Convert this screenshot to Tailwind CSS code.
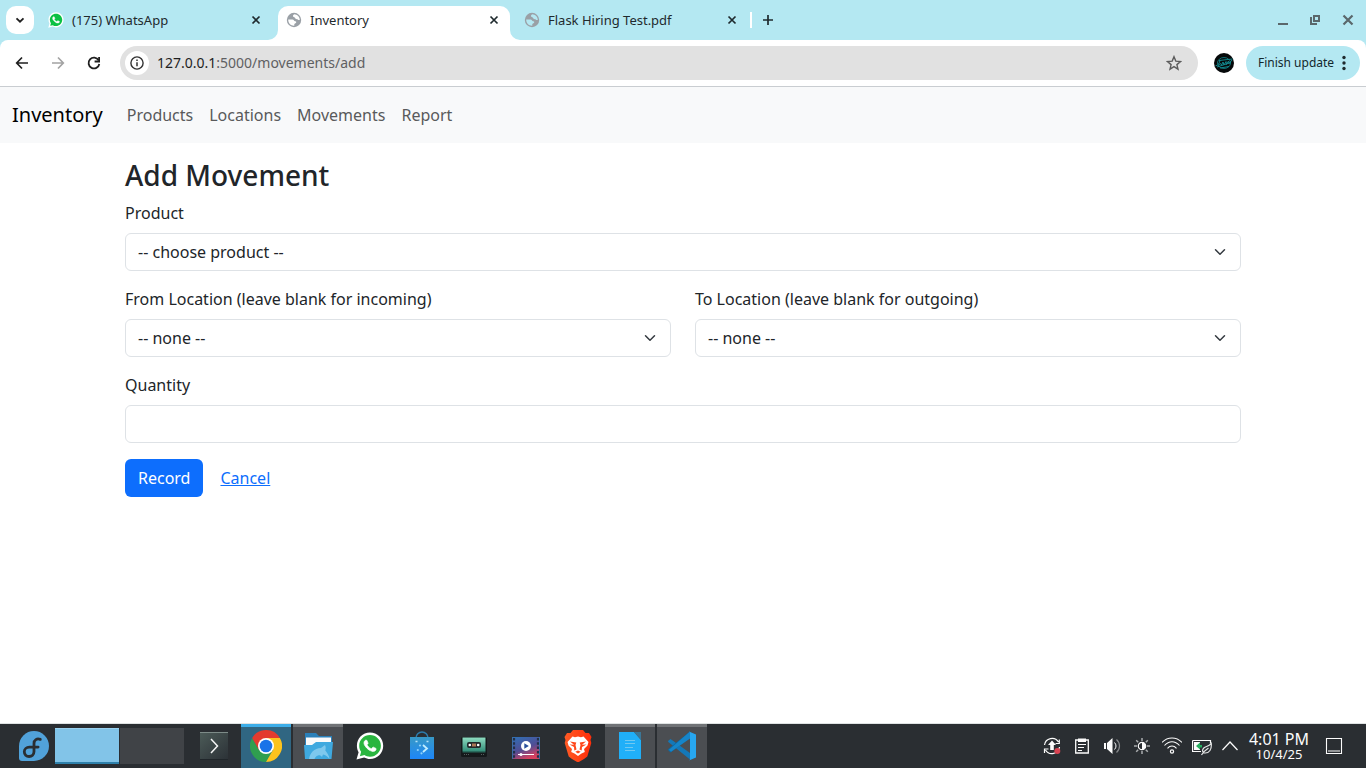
<!DOCTYPE html>
<html lang="en">
<head>
<meta charset="utf-8">
<meta name="viewport" content="width=device-width, initial-scale=1">
<title>Inventory</title>
<script src="https://cdn.jsdelivr.net/npm/@tailwindcss/browser@4"></script>
</head>
<body class="flex min-h-screen flex-col bg-white font-['Noto_Sans',sans-serif] text-base text-[#212529]">

<!-- Shared symbols -->
<svg class="hidden" aria-hidden="true">
  <symbol id="x" viewBox="0 0 16 16"><path d="M4.500 4.500l7 7M11.500 4.500l-7 7" stroke="currentColor" stroke-width="1.700" fill="none"/></symbol>
  <symbol id="chev" viewBox="0 0 16 16"><path d="M2 5l6 6 6-6" fill="none" stroke="#343a40" stroke-width="2" stroke-linecap="round" stroke-linejoin="round"/></symbol>
  <symbol id="globe" viewBox="0 0 16 16"><circle cx="8" cy="8" r="7.200" fill="#9aa0a6"/><path d="M2.200 7.600h4.300c1.300 0 1.400 1.700 2.800 1.700 1 0 1.300 1 .5 1.700L8.300 12v1.800C4.800 14 2.100 11.300 2.200 7.600z M8.200 2.300c-.9.500-1.400 1.200-1.200 2 .2.800 1.300.6 1.700 1.300.5.900 1.100 1.700 2.200 1.500.7-.1.800.9 1.500.9h1.400C13.800 4.900 11.300 2.400 8.200 2.300z" fill="currentColor"/></symbol>
  <symbol id="wa" viewBox="0 0 28 28"><path d="M14 .6C6.700.6.900 6.500.9 13.700c0 2.400.6 4.600 1.700 6.500L.5 27.500l7.600-2c1.800.9 3.800 1.500 5.900 1.500 7.200 0 13.200-6 13.200-13.300C27.200 6.500 21.300.6 14 .6z" fill="#fff"/><path d="M14 2.900c-6 0-10.800 4.800-10.800 10.800 0 2.300.7 4.400 1.900 6.100l-1.200 4.400 4.500-1.200c1.600 1.100 3.500 1.700 5.600 1.700 6 0 10.900-5 10.900-11S20 2.900 14 2.900z" fill="var(--wa)"/><path transform="translate(2 1.800)" d="M17.472 14.382c-.297-.149-1.758-.867-2.030-.967-.273-.099-.471-.148-.67.15-.197.297-.767.966-.94 1.164-.173.199-.347.223-.644.075-.297-.15-1.255-.463-2.390-1.475-.883-.788-1.480-1.761-1.653-2.059-.173-.297-.018-.458.13-.606.134-.133.298-.347.446-.52.149-.174.198-.298.298-.497.099-.198.05-.371-.025-.52-.075-.149-.669-1.612-.916-2.207-.242-.579-.487-.5-.669-.51-.173-.008-.371-.01-.57-.01-.198 0-.52.074-.792.372-.272.297-1.040 1.016-1.040 2.479 0 1.462 1.065 2.875 1.213 3.074.149.198 2.096 3.200 5.077 4.487.709.306 1.262.489 1.694.625.712.227 1.360.195 1.871.118.571-.085 1.758-.719 2.006-1.413.248-.694.248-1.289.173-1.413-.074-.124-.272-.198-.57-.347" fill="#fff" stroke="#fff" stroke-width=".7"/></symbol>
</svg>

<!-- Tab strip -->
<header class="bg-[#b4e8f2]">
  <div class="flex h-10 pt-1.5 pl-1.5 pr-2.5 text-[13px] leading-5 text-[#1f2a2e]">
    <button aria-label="Search tabs" class="mr-1.5 flex size-7 items-center justify-center rounded-[10px] bg-white"><svg class="size-4" viewBox="0 0 16 16"><path d="M4.500 6.300L8 9.700l3.500-3.400" stroke="#1f1f1f" stroke-width="1.800" fill="none"/></svg></button>
    <div class="flex gap-1.5">
      <div class="flex h-7 w-[232px] items-center px-2">
        <svg class="mr-2 size-4 [--wa:#0cc143]"><use href="#wa"/></svg><span class="grow">(175) WhatsApp</span>
        <button aria-label="Close WhatsApp tab"><svg class="size-4"><use href="#x"/></svg></button>
      </div>
      <div class="relative flex h-[34px] w-[232px] items-center rounded-t-[10px] bg-white px-2 pb-1.5">
        <svg class="absolute right-full bottom-0 size-2.5" viewBox="0 0 10 10"><path d="M10 0v10H0A10 10 0 0 0 10 0z" fill="#fff"/></svg>
        <svg class="absolute bottom-0 left-full size-2.5" viewBox="0 0 10 10"><path d="M0 0v10h10A10 10 0 0 1 0 0z" fill="#fff"/></svg>
        <svg class="mr-2 size-4 text-white"><use href="#globe"/></svg><span class="grow">Inventory</span>
        <button aria-label="Close Inventory tab"><svg class="size-4"><use href="#x"/></svg></button>
      </div>
      <div class="flex h-7 w-[232px] items-center px-2">
        <svg class="mr-2 size-4 text-[#b4e8f2]"><use href="#globe"/></svg><span class="grow">Flask Hiring Test.pdf</span>
        <button aria-label="Close PDF tab"><svg class="size-4"><use href="#x"/></svg></button>
      </div>
    </div>
    <div class="mt-1.5 ml-0.5 h-4 w-0.5 bg-white"></div>
    <button aria-label="New tab" class="ml-2 flex h-7 items-center"><svg class="size-4" viewBox="0 0 16 16"><path d="M8 3v10M3 8h10" stroke="#1f2a2e" stroke-width="1.700"/></svg></button>
    <div class="ml-auto flex h-7 items-center gap-4 text-[#5a676b]">
      <button aria-label="Minimize"><svg class="size-4" viewBox="0 0 16 16"><path d="M2 12h10" stroke="currentColor" stroke-width="2"/></svg></button>
      <button aria-label="Restore"><svg class="size-4" viewBox="0 0 16 16"><path d="M6 4h5v5H6zM3 5v7h6" stroke="currentColor" stroke-width="2" fill="none"/></svg></button>
      <button aria-label="Close window"><svg class="size-4" viewBox="0 0 16 16"><path d="M3.500 3.500l9 9M12.500 3.500l-9 9" stroke="currentColor" stroke-width="2.200"/></svg></button>
    </div>
  </div>

  <!-- Toolbar -->
  <div class="flex h-[47px] items-center rounded-t-lg border-b border-[#c9cdd1] bg-white pl-3 pr-1.5">
    <div class="flex gap-4">
      <button aria-label="Back"><svg class="size-5" viewBox="0 0 20 20"><path d="M16 10H5M10 4.500L4.700 10l5.300 5.500" stroke="#1f1f1f" stroke-width="1.700" fill="none"/></svg></button>
      <button aria-label="Forward"><svg class="size-5" viewBox="0 0 20 20"><path d="M4 10h11M10 4.500l5.300 5.500-5.300 5.500" stroke="#a3a3a3" stroke-width="1.700" fill="none"/></svg></button>
      <button aria-label="Reload"><svg class="size-5" viewBox="0 0 20 20"><path d="M14.600 7.200A5.400 5.400 0 1 0 15.300 11" stroke="#1f1f1f" stroke-width="1.800" fill="none"/><path d="M15.100 4v4.500h-4.500" stroke="#1f1f1f" stroke-width="1.800" fill="none"/></svg></button>
    </div>
    <div class="ml-4 flex h-[34px] grow items-center rounded-full bg-[#e1e1e1] pl-[5px] pr-4 text-sm">
      <button aria-label="Site information" class="mr-2 flex size-6 items-center justify-center rounded-full bg-white"><svg class="size-4" viewBox="0 0 16 16"><circle cx="8" cy="8" r="6.100" fill="none" stroke="#333" stroke-width="1.400"/><path d="M8 7.200v4M8 4.500v1.500" stroke="#333" stroke-width="1.500"/></svg></button>
      <div class="grow text-[#5f6062]"><span class="text-[#1f1f1f]">127.0.0.1</span>:5000/movements/add</div>
      <button aria-label="Bookmark this page"><svg class="size-4" viewBox="0 0 16 16"><path d="M8 1.700l1.800 4.400 4.700.4-3.600 3.100 1.100 4.600-4-2.500-4 2.500 1.100-4.600-3.600-3.100 4.700-.4z" fill="none" stroke="#5c5c5c" stroke-width="1.400"/></svg></button>
    </div>
    <button aria-label="Profile" class="mr-3 ml-4"><svg class="size-5" viewBox="0 0 20 20"><circle cx="10" cy="10" r="10" fill="#06090a"/><g fill="none" stroke="#12878c"><ellipse cx="10" cy="10" rx="6.500" ry="5.500" stroke-width=".8"/><path d="M1.500 12.800c3-.3 4-3 4.500-5.500M4 12.500l2.500-2 1 1.500 1.500-3 1 3 2-3.500.5 3L14.500 8l.5 2.500L18 7M3 14l14-4.500M5 7.500L18.500 6M6 15l9-1.500" stroke-width="1"/></g></svg></button>
    <button class="flex h-[34px] w-[114px] items-center justify-between rounded-full bg-[#b4e8f2] pl-3 pr-2 text-xs text-[#12272c]">Finish update<svg class="size-4" viewBox="0 0 16 16" fill="#1f2a2e"><circle cx="8" cy="2.500" r="1.700"/><circle cx="8" cy="8" r="1.700"/><circle cx="8" cy="13.500" r="1.700"/></svg></button>
  </div>
</header>

<nav class="flex h-14 items-center bg-[#f8f9fa] px-3">
  <a href="#" class="mr-4 text-xl text-black">Inventory</a>
  <div class="flex text-[#595a5b]">
    <a href="#" class="px-2">Products</a>
    <a href="#" class="px-2">Locations</a>
    <a href="#" class="px-2">Movements</a>
    <a href="#" class="px-2">Report</a>
  </div>
</nav>

<main class="mx-auto w-full max-w-[1140px] grow px-3 pt-4">
  <h2 class="mb-2.5 text-[28px] leading-8 font-medium">Add Movement</h2>
  <form class="flex flex-col gap-4">
    <div>
      <label for="product" class="mb-2 block">Product</label>
      <div class="relative">
        <select id="product" class="block h-[38px] w-full appearance-none rounded-md border border-[#dee2e6] bg-white pl-3 pr-9"><option>-- choose product --</option></select>
        <svg class="pointer-events-none absolute top-[13px] right-3.5 h-3 w-3.5"><use href="#chev"/></svg>
      </div>
    </div>
    <div class="grid grid-cols-2 gap-6">
      <div>
        <label for="from" class="mb-2 block">From Location (leave blank for incoming)</label>
        <div class="relative">
          <select id="from" class="block h-[38px] w-full appearance-none rounded-md border border-[#dee2e6] bg-white pl-3 pr-9"><option>-- none --</option></select>
          <svg class="pointer-events-none absolute top-[13px] right-3.5 h-3 w-3.5"><use href="#chev"/></svg>
        </div>
      </div>
      <div>
        <label for="to" class="mb-2 block">To Location (leave blank for outgoing)</label>
        <div class="relative">
          <select id="to" class="block h-[38px] w-full appearance-none rounded-md border border-[#dee2e6] bg-white pl-3 pr-9"><option>-- none --</option></select>
          <svg class="pointer-events-none absolute top-[13px] right-3.5 h-3 w-3.5"><use href="#chev"/></svg>
        </div>
      </div>
    </div>
    <div>
      <label for="qty" class="mb-2 block">Quantity</label>
      <input id="qty" type="text" inputmode="numeric" class="block h-[38px] w-full rounded-md border border-[#dee2e6] bg-white px-3">
    </div>
    <div class="flex items-center gap-[17px]">
      <button type="button" class="h-[38px] rounded-md bg-[#0d6efd] px-[13px] text-white">Record</button>
      <a href="#" class="text-[#0d6efd] underline">Cancel</a>
    </div>
  </form>
</main>

<!-- Desktop panel -->
<footer class="flex h-[45px] items-center border-t border-[#dfe3e3] bg-[#2a2e32] pl-[18px] pr-[23px] text-[#fcfcfc]">
  <button aria-label="Application launcher"><svg class="size-8" viewBox="0 0 32 32"><path d="M16 1a15 15 0 1 1 0 30H4a3 3 0 0 1-3-3V16A15 15 0 0 1 16 1z" fill="#51a2da"/><path d="M22.300 9.400c-3.400-1.400-6.300.6-6.300 4v8.200c0 3-2.200 4.900-4.900 4.900-2.800 0-4.800-2-4.800-4.700s2.300-4.700 5-4.700h8.800" stroke="#2a2e32" stroke-width="2.800" fill="none" stroke-linecap="round"/></svg></button>
  <div class="ml-[5px] flex gap-px">
    <button aria-label="Desktop 1" class="h-9 w-16 border-t border-b-2 border-t-[#9bd2f0] border-b-[#2f81ab] bg-[#82c4e8]"></button>
    <button aria-label="Desktop 2" class="h-9 w-16 bg-[#404347]"></button>
  </div>
  <button aria-label="Terminal" class="ml-4 flex size-7 items-center justify-center border-t border-b border-t-[#7d8b88] border-b-[#20262a] bg-linear-to-br from-[#4c5b58] to-[#2c3237]"><svg class="size-5" viewBox="0 0 20 20"><path d="M7 3l6.500 7L7 17" stroke="#f5f5f5" stroke-width="1.500" fill="none"/></svg></button>
  <div class="ml-[13px] flex h-full gap-0.5">
    <button aria-label="Chrome" class="flex w-[50px] items-center justify-center border-t-3 border-[#3daee9] bg-[#306682]"><svg class="mb-1 size-8" viewBox="0 0 32 32"><path d="M16 16L22.900 20 16 32A16 16 0 0 1 2.140 8L9.100 20z" fill="#2f9e4f"/><path d="M16 8h13.860A16 16 0 0 1 16 32l6.930-12z" fill="#fcc31e"/><path d="M16 8H29.860A16 16 0 0 0 2.140 8L9.070 20z" fill="#e33b2e"/><circle cx="16" cy="16" r="8" fill="#fff"/><circle cx="16" cy="16" r="6.300" fill="#1a73e8"/></svg></button>
    <button aria-label="Files" class="flex w-[50px] items-center justify-center border-t-3 border-[#707376] bg-[#4b4e52]"><svg class="mb-1 size-8" viewBox="0 0 32 32"><path d="M3 3h11l3 3h13v10H3z" fill="#2a80b9"/><path d="M4 7.500h25V18H4z" fill="#fafafa"/><path d="M2 15h8l4-3h17l-1.500 17H3z" fill="#3fa9df"/><path d="M7 29c1-6 5-11 12-11l4-3c1 2 .8 3.500.3 5.500 2.200 2.500 3.700 5 4.200 8.500-2-2.500-4-4-6.500-4.500l-1 2.500c-1-1.500-2.500-2-4-1.500-2 .5-3 2-3.500 3.500z" fill="#7ec8ed"/></svg></button>
    <button aria-label="WhatsApp" class="flex w-[50px] items-center justify-center"><svg class="size-7 [--wa:#29b53f]"><use href="#wa"/></svg></button>
    <button aria-label="Discover" class="flex w-[50px] items-center justify-center"><svg class="size-8" viewBox="0 0 32 32"><defs><linearGradient id="bag" x1="0" y1="0" x2="0" y2="1"><stop stop-color="#3899c6"/><stop offset="1" stop-color="#1d86f8"/></linearGradient></defs><path d="M10 10V8a6 6 0 0 1 12 0v2" fill="none" stroke="#2c7cac" stroke-width="1.500"/><path d="M4 7h24v22H4z" fill="url(#bag)"/><path d="M9.500 11.500h2M20.500 11.500h2" stroke="#b5e2fa" stroke-width="1.500"/><path d="M17 15l4 3.500-4 3.500" stroke="#c0edff" stroke-width="1.800" fill="none"/><g fill="#8fd2fc"><circle cx="14" cy="15.500" r="1.100"/><circle cx="11.800" cy="20" r="1.100"/><circle cx="15.500" cy="23.300" r="1.100"/></g></svg></button>
    <button aria-label="Cassette player" class="flex w-[50px] items-center justify-center"><svg class="size-8" viewBox="0 0 32 32"><defs><linearGradient id="tape" x1="0" y1="0" x2="0" y2="1"><stop stop-color="#8edcc1"/><stop offset="1" stop-color="#35907b"/></linearGradient></defs><rect x="3" y="7" width="26" height="20" rx="1.500" fill="#15191b"/><path d="M4.500 7.500h23V21h-23z" fill="url(#tape)"/><rect x="9" y="12" width="14" height="6" rx="2" fill="#22292b"/><path d="M14 13.500h4v3h-4z" fill="#ac7656"/><circle cx="11.800" cy="15" r="1.300" fill="#fff"/><circle cx="20.200" cy="15" r="1.300" fill="#fff"/><path d="M4.500 21h23v1.500h-23z" fill="#286b5d"/><path d="M6 24.500h6M23 24.500h4" stroke="#53605e" stroke-dasharray="1 1"/></svg></button>
    <button aria-label="Video player" class="flex w-[50px] items-center justify-center"><svg class="size-8" viewBox="0 0 32 32"><defs><linearGradient id="vid" x1="0" y1="0" x2=".5" y2="1"><stop stop-color="#2e71b7"/><stop offset=".6" stop-color="#514d94"/><stop offset="1" stop-color="#d5405f"/></linearGradient></defs><path d="M2 7h28v22H2z" fill="url(#vid)"/><path d="M4 8v21M28 8v21" stroke="#223048" stroke-width="2.200" stroke-dasharray="2.500 1.800"/><path d="M2.500 7v22M29.500 7v22" stroke="#3b6ea7"/><circle cx="16" cy="16" r="5" fill="#fff"/><path d="M14.300 13.300l4.500 2.700-4.500 2.700z" fill="#294f9b"/><path d="M8 24.500h16" stroke="#fff"/><circle cx="11" cy="24.500" r="1.500" fill="#fff"/></svg></button>
    <button aria-label="Brave" class="flex w-[50px] items-center justify-center"><svg class="size-8" viewBox="0 0 32 32"><defs><linearGradient id="br"><stop stop-color="#ff5a24"/><stop offset="1" stop-color="#ff2e0a"/></linearGradient></defs><path d="M11 0h10l2.500 3L27 3l2.500 4-1 3 .8 3-4 13.500L22 29l-6 3.500L10 29l-3.300-2.500-4-13.500.8-3-1-3L5 3l3.500 0z" fill="url(#br)"/><path d="M10.500 6.500l2.500.7L16 6.500l3 .7 2.500-.7 5 5.500-1 3.500-3.500 3.500.8 3-3.300 1.500L16 26l-3.500-2.500-3.300-1.500.8-3-3.500-3.500-1-3.500z" fill="#fff"/><path d="M8 11.500l6.300 1-.8 2.500 1 4.500-2.200 1-.3-3.500-4.500-2.500 4.500.3zM24 11.500l-6.300 1 .8 2.500-1 4.500 2.200 1 .3-3.500 4.500-2.500-4.500.3zM13.300 21.800l2.700-1.300 2.700 1.300-2.700 1.700z" fill="#ff471b"/></svg></button>
    <button aria-label="Document viewer" class="flex w-[50px] items-center justify-center border-t-3 border-[#707376] bg-[#4b4e52]"><svg class="mb-1 size-8" viewBox="0 0 32 32"><path d="M5 2h15l7 8v19H5z" fill="#20aff8"/><path d="M20 2h7v8z" fill="#3b7797"/><path d="M11 10.500h10M11 13.500h10M11 17.500h8M11 20.500h10" stroke="#70c8f1" stroke-width="1.100"/></svg></button>
    <button aria-label="Visual Studio Code" class="flex w-[50px] items-center justify-center border-t-3 border-[#707376] bg-[#4b4e52]"><svg class="mb-1 size-8" viewBox="0 0 32 32"><path d="M2 11l2.500-2L24 23v6.500L2.300 12z" fill="#1478b8"/><path d="M2 20l2.500 2.500L24 8V1.500L2.300 19z" fill="#0969a6"/><path d="M3 19.800l2 2L24 8.500V1.500z" fill="#1685c8"/><path d="M23 1.500l7 3v23l-7 3c1-.5 1-1 1-2v-25c0-1 0-1.500-1-2z" fill="#27a7f0"/></svg></button>
  </div>
  <div class="ml-auto flex items-center gap-2.5">
    <button aria-label="Updates"><svg class="size-5" viewBox="0 0 20 20"><path d="M2.500 9A7.600 7.600 0 0 1 16.500 6M17.500 11a7.600 7.600 0 0 1-14 3M17.300 3.500v4h-3.800M2.500 17v-4h4" fill="none" stroke="#fcfcfc" stroke-width="1.200"/><path d="M10 4.500l4 4.500h-2.200v5H8.200V9H6z" fill="#fcfcfc"/><circle cx="15.300" cy="15" r="3" fill="#da4453"/></svg></button>
    <button aria-label="Clipboard"><svg class="size-5" viewBox="0 0 20 20"><path d="M3.700 4h12.600v13H3.700z" fill="none" stroke="#fcfcfc" stroke-width="1.300"/><path d="M6 2.500h8V6H6z" fill="#fcfcfc"/><path d="M6 8.500h8M6 11.500h6M6 14.500h4" stroke="#fcfcfc"/></svg></button>
    <button aria-label="Volume"><svg class="size-5" viewBox="0 0 20 20"><path d="M2 7h2v6H2zM5 7l5.500-5v16L5 13z" fill="#fcfcfc"/><path d="M12.500 6.500c2 2 2 5 0 7" stroke="#fcfcfc" fill="none"/><path d="M14.500 3.500c4 3.500 4 9.500 0 13" stroke="#85888a" fill="none" stroke-width="1.200"/></svg></button>
    <button aria-label="Brightness"><svg class="size-5" viewBox="0 0 20 20"><circle cx="10" cy="10" r="3.700" fill="none" stroke="#fcfcfc" stroke-width="1.200"/><path d="M10 6.500a3.500 3.500 0 0 1 0 7z" fill="#fcfcfc"/><path d="M10 2v3M10 15v3M2 10h3M15 10h3M4.200 4.200l2 2M13.800 13.800l2 2M15.800 4.200l-2 2M6.200 13.800l-2 2" stroke="#a9acae" stroke-width="1.500"/></svg></button>
    <button aria-label="Wi-Fi"><svg class="size-5" viewBox="0 0 20 20"><path d="M0 6.500C5.500.5 14.500.5 20 6.500M2.500 9.500c4.500-5 10.500-5 15 0M5.500 12.300c2.700-3 6.300-3 9 0" stroke="#fcfcfc" stroke-width="1.100" fill="none"/><circle cx="10" cy="15.500" r="1.600" stroke="#fcfcfc" stroke-width="1.200" fill="none"/></svg></button>
    <button aria-label="Power"><svg class="size-5" viewBox="0 0 20 20"><path d="M.6 4.500h17.900v3M9 15.500H.6v-11" fill="none" stroke="#fcfcfc" stroke-width="1.200"/><path d="M2 6h6v8H2z" fill="#fcfcfc"/><path d="M4 10l4-3.500V9h2v2.500H8v2z" fill="#27ae60"/><path d="M19.300 7.500c.5 6-2 9.500-6 9.500-3 0-3.500-3-1.500-5s4.500-1 7.500-4.500zM9.500 19c2-3.500 4-5 7-7" fill="#2a2e32" stroke="#e3e4e5" stroke-width="1.200"/></svg></button>
  </div>
  <button aria-label="Show hidden icons" class="ml-2"><svg class="size-5" viewBox="0 0 20 20"><path d="M2.500 14L10 6l7.500 8" fill="none" stroke="#fcfcfc" stroke-width="1.200"/></svg></button>
  <div class="ml-2 w-[62px] text-center">
    <div class="text-base leading-4">4:01 PM</div>
    <div class="text-[13px] leading-[14px]">10/4/25</div>
  </div>
  <button aria-label="Peek at desktop" class="ml-[15px]"><svg class="size-[18px]" viewBox="0 0 18 18"><path d="M1.500 1.500h15v15h-15zM3 14h12" fill="none" stroke="#fcfcfc" stroke-width="1.100"/></svg></button>
</footer>
</body>
</html>
